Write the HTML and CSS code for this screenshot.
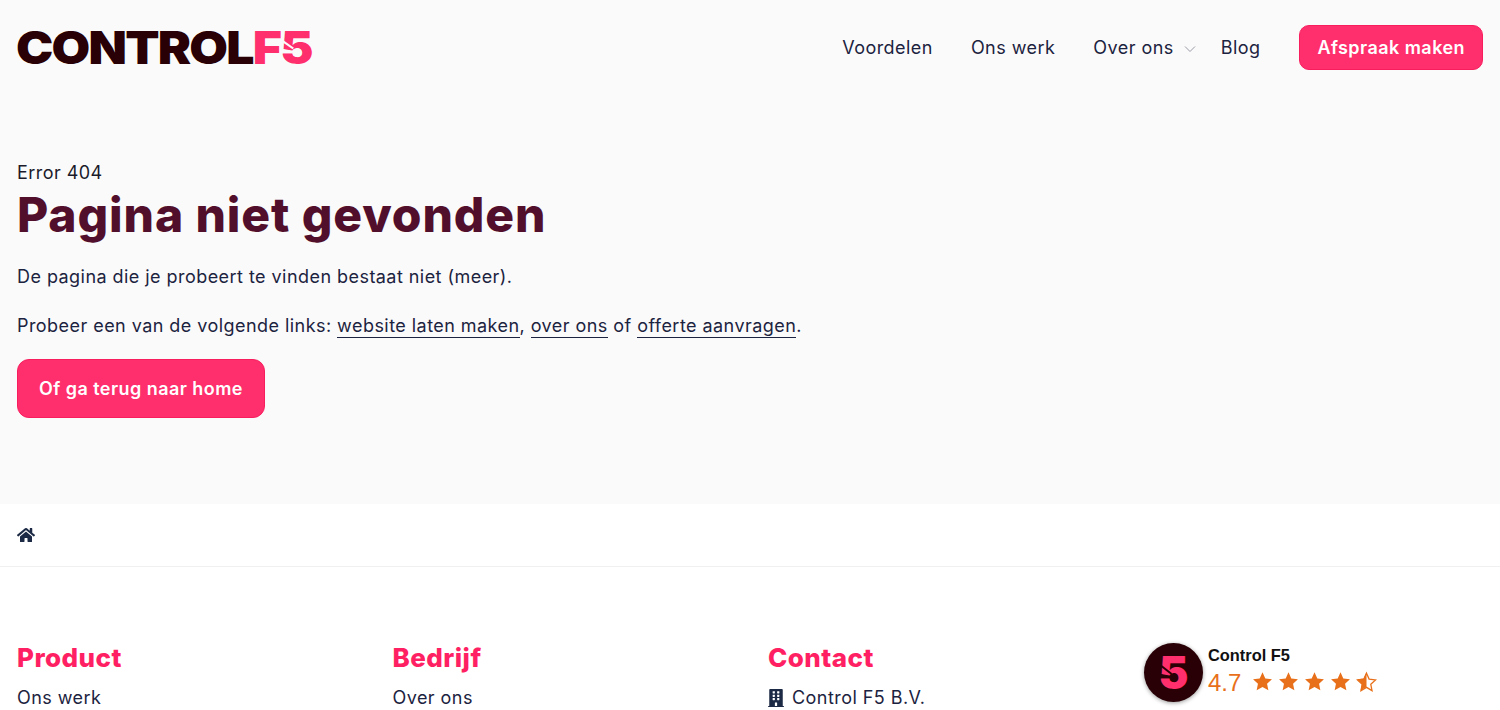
FILE: index.html
```html
<!DOCTYPE html>
<html lang="nl">
<head>
<meta charset="utf-8">
<title>Pagina niet gevonden</title>
<link rel="stylesheet" href="styles.css">
</head>
<body>
<header class="site-header">
  <a class="logo" href="#"><span class="logo-dark">CONTROL</span><span class="logo-pink">F<span class="five five-light">5</span></span></a>
  <nav class="nav">
    <a class="nav-link" href="#">Voordelen</a>
    <a class="nav-link" href="#">Ons werk</a>
    <a class="nav-link nav-drop" href="#">Over ons
      <svg class="chev" viewBox="0 0 12 8" width="12" height="8"><path d="M1 1.500l5 5 5-5" fill="none" stroke="#9a9ca8" stroke-width="1"/></svg>
    </a>
    <a class="nav-link nav-blog" href="#">Blog</a>
    <a class="btn btn-nav" href="#">Afspraak maken</a>
  </nav>
</header>
<main class="hero">
  <p class="eyebrow">Error 404</p>
  <h1 class="title">Pagina niet gevonden</h1>
  <p class="copy">De pagina die je probeert te vinden bestaat niet (meer).</p>
  <p class="copy">Probeer een van de volgende links: <a class="ul" href="#">website laten maken</a>, <a class="ul" href="#">over ons</a> of <a class="ul" href="#">offerte aanvragen</a>.</p>
  <a class="btn btn-hero" href="#">Of ga terug naar home</a>
</main>
<div class="crumbs">
  <svg class="home" viewBox="0 0 576 512" width="18" height="16"><path fill="#1c2a45" d="M280.400 148.300L96 300.100V464a16 16 0 0 0 16 16l112.100-.3a16 16 0 0 0 15.900-16V368a16 16 0 0 1 16-16h64a16 16 0 0 1 16 16v95.600a16 16 0 0 0 16 16.100L464 480a16 16 0 0 0 16-16V300L295.700 148.300a12.200 12.200 0 0 0-15.300 0zM571.600 251.500L488 182.600V44.100a12 12 0 0 0-12-12h-56a12 12 0 0 0-12 12v72.600L318.500 43a48 48 0 0 0-61 0L4.300 251.500a12 12 0 0 0-1.600 16.900l25.500 31A12 12 0 0 0 45.200 301l235.200-193.700a12.200 12.200 0 0 1 15.300 0L530.900 301a12 12 0 0 0 16.900-1.600l25.500-31a12 12 0 0 0-1.700-16.900z"/></svg>
</div>
<footer class="footer">
  <div class="col">
    <h2 class="col-title">Product</h2>
    <a class="foot-link" href="#">Ons werk</a>
  </div>
  <div class="col">
    <h2 class="col-title">Bedrijf</h2>
    <a class="foot-link" href="#">Over ons</a>
  </div>
  <div class="col">
    <h2 class="col-title">Contact</h2>
    <div class="addr">
      <svg class="bld" viewBox="0 0 448 512" width="16" height="18"><path fill="#1c2a45" d="M436 480h-20V24c0-13.300-10.700-24-24-24H56C42.700 0 32 10.700 32 24v456H12c-6.600 0-12 5.400-12 12v20h448v-20c0-6.600-5.400-12-12-12zM128 76c0-6.600 5.400-12 12-12h40c6.600 0 12 5.400 12 12v40c0 6.600-5.400 12-12 12h-40c-6.600 0-12-5.400-12-12V76zm0 96c0-6.600 5.400-12 12-12h40c6.600 0 12 5.400 12 12v40c0 6.600-5.400 12-12 12h-40c-6.600 0-12-5.400-12-12v-40zm52 148h-40c-6.600 0-12-5.400-12-12v-40c0-6.600 5.400-12 12-12h40c6.600 0 12 5.400 12 12v40c0 6.600-5.400 12-12 12zm76 160h-64v-84c0-6.600 5.400-12 12-12h40c6.600 0 12 5.400 12 12v84zm64-172c0 6.600-5.400 12-12 12h-40c-6.600 0-12-5.400-12-12v-40c0-6.600 5.400-12 12-12h40c6.600 0 12 5.400 12 12v40zm0-96c0 6.600-5.400 12-12 12h-40c-6.600 0-12-5.400-12-12v-40c0-6.600 5.400-12 12-12h40c6.600 0 12 5.400 12 12v40zm0-96c0 6.600-5.400 12-12 12h-40c-6.600 0-12-5.400-12-12V76c0-6.600 5.400-12 12-12h40c6.600 0 12 5.400 12 12v40z"/></svg>
      <span>Control F5 B.V.</span>
    </div>
  </div>
  <div class="rating">
    <div class="badge"><span class="badge-5 five five-dark">5</span></div>
    <div class="rating-body">
      <div class="rating-name">Control F5</div>
      <div class="rating-line">
        <span class="rating-num">4.7</span>
        <span class="stars">
          <svg viewBox="0 0 24 24" width="21" height="21"><path class="star" d="M12 1.500l3.200 7 7.600.900-5.600 5.200 1.500 7.500L12 18.300l-6.700 3.800 1.500-7.500L1.200 9.400l7.600-.9z"/></svg>
          <svg viewBox="0 0 24 24" width="21" height="21"><path class="star" d="M12 1.500l3.200 7 7.600.900-5.600 5.200 1.500 7.500L12 18.300l-6.700 3.800 1.500-7.500L1.200 9.400l7.600-.9z"/></svg>
          <svg viewBox="0 0 24 24" width="21" height="21"><path class="star" d="M12 1.500l3.200 7 7.600.900-5.600 5.200 1.500 7.500L12 18.300l-6.700 3.800 1.500-7.500L1.200 9.400l7.600-.9z"/></svg>
          <svg viewBox="0 0 24 24" width="21" height="21"><path class="star" d="M12 1.500l3.200 7 7.600.900-5.600 5.200 1.500 7.500L12 18.300l-6.700 3.800 1.500-7.500L1.200 9.400l7.600-.9z"/></svg>
          <svg viewBox="0 0 24 24" width="21" height="21"><path class="star-o" d="M12 2.500l3 6.800 7.300.9-5.400 5 1.400 7.200L12 18.700l-6.300 3.700 1.400-7.200-5.400-5 7.300-.9z"/><path class="star" d="M12 1.500v16.800l-6.700 3.800 1.500-7.500L1.200 9.400l7.600-.9z"/></svg>
        </span>
      </div>
      <div class="rating-note">Gebaseerd op 80 reviews</div>
    </div>
  </div>
</footer>
</body>
</html>
```
FILE: styles.css
```css
* { box-sizing: border-box; }
html, body { margin: 0; height: 710px; overflow: hidden; }
body { background: #fff; color: #1c2340; font-family: Inter, "Liberation Sans", sans-serif; font-size: 18px; font-weight: 400; line-height: 28px; letter-spacing: .45px; }
a { color: inherit; text-decoration: none; }
p { margin: 0; }

.site-header { display: flex; justify-content: space-between; align-items: center; height: 95px; padding: 0 17px; background: #fafafa; }
.logo { display: flex; font-family: Inter, sans-serif; font-weight: 900; font-size: 45px; line-height: 46px; letter-spacing: -1.6px; transform: scaleX(1.11); transform-origin: left center; margin-left: -1px; }
.logo-dark { color: #280005; }
.logo-pink { color: #ff2e6c; }
.five { position: relative; display: inline-block; }
.five::after { content: ""; position: absolute; left: 5%; top: 42%; width: 44%; height: 2px; transform: rotate(38deg); }
.five-light::after { background: #fafafa; }
.five-dark::after { background: #280005; }
.nav { display: flex; align-items: center; }
.nav-link { margin-right: 38px; }
.nav-drop { margin-right: 25px; display: flex; align-items: center; gap: 10px; }
.nav-blog { margin-right: 39px; }
.chev { margin-top: 3px; }
.btn { display: block; background: #ff2e6c; border: 1px solid #f81e5e; color: #fff; font-weight: 600; }
.btn-nav { height: 45px; line-height: 43px; padding: 0 17px; border-radius: 10px; }

.hero { background: #fafafa; height: 409px; padding: 64px 17px 0; }
.eyebrow { color: #1a1a2a; }
.title { margin: 0 0 20px; font-family: Inter, sans-serif; font-weight: 800; font-size: 48px; line-height: 56px; color: #520f2c; letter-spacing: .9px; }
.copy { margin-bottom: 21px; }
.ul { border-bottom: 1px solid #1c2340; padding-bottom: 1px; }
.btn-hero { width: 248px; height: 59px; line-height: 57px; margin-top: -2px; text-align: center; border-radius: 12px; }

.crumbs { height: 63px; display: flex; align-items: center; padding: 0 17px; background: #fff; border-bottom: 1px solid #f0f0f2; }
.footer { display: grid; grid-template-columns: 375.500px 375.500px 376px auto; padding: 75px 17px 0 17px; }
.col-title { margin: 0 0 12px; font-family: Inter, sans-serif; font-weight: 800; font-size: 26px; line-height: 32px; color: #ff1f63; }
.foot-link { border-bottom: 1px solid #1c2340; display: block; width: fit-content; line-height: 24px; }
.addr { display: flex; align-items: center; gap: 8px; line-height: 24px; }
.rating { display: flex; gap: 5px; margin-top: 1px; }
.badge { width: 59px; height: 59px; border-radius: 50%; background: #280005; box-shadow: 0 1px 4px rgba(0,0,0,.4); display: flex; align-items: center; justify-content: center; }
.badge-5 { color: #ff2e6c; font-family: Inter, sans-serif; font-weight: 900; font-size: 45px; line-height: 1; letter-spacing: 0; }
.rating-body { font-family: "Liberation Sans", Arial, sans-serif; letter-spacing: 0; padding-top: 4px; }
.rating-name { font-size: 16.400px; font-weight: 700; line-height: 17px; color: #111; }
.rating-line { display: flex; align-items: center; gap: 11px; height: 38px; }
.rating-num { font-size: 24px; color: #e8701a; font-weight: 400; }
.stars { display: flex; gap: 5px; margin-top: -3px; }
.star { fill: #e8701a; }
.star-o { fill: none; stroke: #e8701a; stroke-width: 1.500; }
.rating-note { font-size: 16.400px; font-weight: 400; color: #555; line-height: 22px; margin-top: 3px; }
```
